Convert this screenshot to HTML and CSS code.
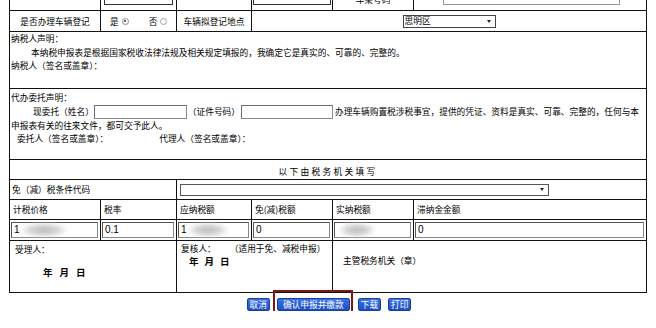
FILE: index.html
```html
<!DOCTYPE html>
<html lang="zh-CN">
<head>
<meta charset="utf-8">
<title>车辆购置税申报表</title>
<link rel="stylesheet" href="styles.css">
</head>
<body>
<div class="page">
  <table class="form">
    <colgroup>
      <col class="c1"><col class="c2"><col class="c3"><col class="c4"><col class="c5"><col class="c6">
    </colgroup>
    <tr class="cut">
      <td><div class="clip"></div></td>
      <td><div class="clip"><span class="box cut-a"></span></div></td>
      <td><div class="clip"></div></td>
      <td><div class="clip"><span class="box cut-b"></span></div></td>
      <td><div class="clip center"><span class="cut-text">车架号码</span></div></td>
      <td><div class="clip"><span class="box cut-c"></span></div></td>
    </tr>
    <tr class="r-reg">
      <td class="center">是否办理车辆登记</td>
      <td>
        <div class="radios">
          <span>是</span><span class="radio checked"></span>
          <span class="no">否</span><span class="radio"></span>
        </div>
      </td>
      <td class="center">车辆拟登记地点</td>
      <td colspan="3">
        <div class="select small"><span>思明区</span><i class="arrow"></i></div>
      </td>
    </tr>
    <tr class="r-decl">
      <td colspan="6" class="top">
        <div class="line">纳税人声明：</div>
        <div class="line indent">本纳税申报表是根据国家税收法律法规及相关规定填报的，我确定它是真实的、可靠的、完整的。</div>
        <div class="line">纳税人（签名或盖章）：</div>
      </td>
    </tr>
    <tr class="r-agent">
      <td colspan="6" class="top">
        <div class="agent">
          <div class="aline">代办委托声明：</div>
          <div class="aline tall indent">现委托（姓名）<span class="box in-name"></span>（证件号码）<span class="box in-id"></span>办理车辆购置税涉税事宜，提供的凭证、资料是真实、可靠、完整的，任何与本</div>
          <div class="aline">申报表有关的往来文件，都可交予此人。</div>
          <div class="aline sign"><span class="s1">委托人（签名或盖章）：</span><span class="s2">代理人（签名或盖章）：</span></div>
        </div>
      </td>
    </tr>
    <tr class="r-thin">
      <td colspan="6" class="center spaced">以下由税务机关填写</td>
    </tr>
    <tr class="r-thin">
      <td colspan="2" class="pad">免（减）税条件代码</td>
      <td colspan="4"><div class="select wide"><span></span><i class="arrow"></i></div></td>
    </tr>
    <tr class="r-thin labels">
      <td>计税价格</td>
      <td>税率</td>
      <td>应纳税额</td>
      <td>免(减)税额</td>
      <td>实纳税额</td>
      <td>滞纳金金额</td>
    </tr>
    <tr class="r-inputs">
      <td><div class="field">1<span class="blur b1"></span></div></td>
      <td><div class="field">0.1</div></td>
      <td><div class="field">1<span class="blur b2"></span></div></td>
      <td><div class="field">0</div></td>
      <td><div class="field"><span class="blur b3"></span></div></td>
      <td><div class="field">0</div></td>
    </tr>
    <tr class="r-bottom">
      <td colspan="2" class="top">
        <div class="accept">受理人：</div>
        <div class="date d1"><span>年</span><span>月</span><span>日</span></div>
      </td>
      <td colspan="2" class="top">
        <div class="review"><span>复核人：</span><span class="note">（适用于免、减税申报）</span></div>
        <div class="date d2"><span>年</span><span>月</span><span>日</span></div>
      </td>
      <td colspan="2" class="top">
        <div class="office">主管税务机关（章）</div>
      </td>
    </tr>
  </table>

  <div class="buttons">
    <button class="btn">取消</button>
    <span class="mark"><button class="btn wide-btn">确认申报并缴款</button></span>
    <button class="btn">下载</button>
    <button class="btn">打印</button>
  </div>
</div>
</body>
</html>
```
FILE: styles.css
```css
* { box-sizing: border-box; }
html, body { margin: 0; padding: 0; background: #fff; }
body {
  font-family: "Noto Sans CJK SC", "Liberation Sans", sans-serif;
  font-size: 8.7px;
  color: #000;
}
.page { width: 656px; padding-left: 9px; }

.form {
  border-collapse: collapse;
  table-layout: fixed;
  width: 637px;
}
.form td {
  border: 1px solid #111;
  padding: 0;
  vertical-align: middle;
  line-height: 13px;
  white-space: nowrap;
  overflow: hidden;
}
.c1 { width: 91px; }
.c2 { width: 76px; }
.c3 { width: 75px; }
.c4 { width: 81px; }
.c5 { width: 81px; }
.c6 { width: 233px; }

.center { text-align: center; }
.top { vertical-align: top !important; }
.pad { padding-left: 2px !important; }

/* partially visible top row */
.cut td { border-top: none; }
.clip {
  height: 10px;
  overflow: hidden;
  display: flex;
  align-items: flex-end;
}
.clip.center { justify-content: center; }
.cut-text { line-height: 13px; margin-bottom: 4px; }
.box {
  display: inline-block;
  height: 14px;
  border: 1px solid #8a8a8a;
  border-top-color: #6d6d6d;
  border-left-color: #6d6d6d;
  background: #fff;
  vertical-align: middle;
}
.clip .box { margin-bottom: 5px; flex: none; }
.cut-a { width: 69px; margin-left: 3px; border-color: #333; }
.cut-b { width: 78px; margin-left: 1px; border-color: #333; }
.cut-c { width: 177px; margin-left: 29px; border-color: #999; }

/* registration row */
.r-reg td { height: 21px; }
.radios { display: flex; align-items: center; padding-left: 9px; }
.radio {
  width: 7px; height: 7px;
  border: 1px solid #a5a5a5;
  border-radius: 50%;
  margin-left: 3px;
  background: #fff;
  position: relative;
}
.radio.checked { border-color: #8d8d8d; }
.radio.checked::after {
  content: "";
  position: absolute;
  left: 1.5px; top: 1.5px;
  width: 2px; height: 2px;
  border-radius: 50%;
  background: #333;
}
.radios .no { margin-left: 20px; }

.select {
  display: flex;
  align-items: center;
  justify-content: space-between;
  background: #fff;
  border: 1px solid #444;
  line-height: 10px;
}
.select.small { width: 93px; height: 13px; margin: 0 auto; padding: 0 4px 0 1px; }
.select.wide { width: 369px; height: 12px; margin-left: 3px; padding: 0 4px 0 1px; border-color: #555; }
.arrow {
  width: 0; height: 0;
  border-left: 2px solid transparent;
  border-right: 2px solid transparent;
  border-top: 3px solid #222;
}

/* declarations */
.r-decl td { height: 57px; }
.line { line-height: 13.5px; padding-left: 1px; }
.indent { padding-left: 21px; }
.r-agent td { height: 71px; }
.agent { padding-top: 2px; padding-left: 1px; }
.aline { height: 13px; line-height: 13px; display: flex; align-items: center; }
.aline.indent { padding-left: 22px; }
.aline.tall { height: 15px; }
.in-name { width: 93px; margin: 0 1px 0 0; }
.in-id { width: 92px; margin: 0 2px 0 1px; }
.aline.sign { height: 12px; }
.s1 { margin-left: 6px; }
.s2 { margin-left: 51px; }

.r-thin td { height: 20px; }
.spaced { letter-spacing: 2.3px; padding-top: 3px !important; }
.labels td { padding-left: 3px; }

.r-inputs td { height: 21px; padding: 0 2px 0 1px; }
.field {
  height: 16px;
  border: 1px solid #888;
  border-top-color: #555;
  border-left-color: #555;
  background: #fff;
  font-family: "Liberation Sans", sans-serif;
  font-size: 10px;
  line-height: 14px;
  padding-left: 2px;
  display: flex;
  align-items: center;
}
.blur {
  display: inline-block;
  height: 14px;
  background: radial-gradient(ellipse at center, #b9b9b9 0%, #d4d4d4 45%, rgba(235,235,235,0) 75%);
  filter: blur(2px);
}
.b1 { width: 46px; margin-left: 1px; }
.b2 { width: 40px; margin-left: 1px; }
.b3 { width: 36px; margin-left: 2px; }

.r-bottom td { height: 52px; }
.accept { padding: 2px 0 0 5px; line-height: 13px; }
.date { display: flex; line-height: 12px; font-size: 9.5px; font-weight: bold; }
.date span + span { margin-left: 7px; }
.d1 { padding: 10px 0 0 33px; }
.d2 { padding: 0 0 0 12px; }
.d2 span + span { margin-left: 6px; }
.review { padding: 1px 0 0 4px; line-height: 13px; display: flex; }
.note { margin-left: 14px; }
.office { padding: 13px 0 0 10px; line-height: 13px; }

/* buttons */
.buttons {
  width: 637px;
  display: flex;
  justify-content: center;
  align-items: center;
  gap: 7px;
  margin-top: 5px;
  padding-left: 3px;
}
.btn {
  font-family: "Noto Sans CJK SC", sans-serif;
  font-size: 8.7px;
  line-height: 11px;
  height: 13px;
  padding: 0 2px;
  color: #fff;
  background: linear-gradient(#3b72e6, #1d4fc2);
  border: 1px solid #1a3f9a;
  border-radius: 2px;
  display: block;
}
.wide-btn { padding: 0 5px; }
.mark { position: relative; display: block; margin-right: 1px; }
.mark::before {
  content: "";
  position: absolute;
  left: -4px; right: -3px; top: -8px; bottom: -5px;
  border: 2px solid #7e1519;
}
```
